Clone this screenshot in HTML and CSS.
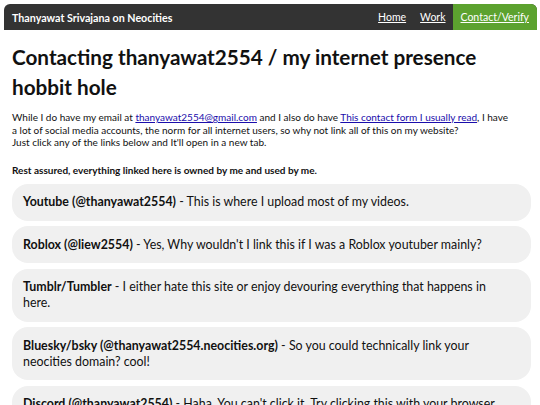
FILE: index.html
```html
<!DOCTYPE html>
<html>
<head>
<meta charset="utf-8">
<link rel="stylesheet" href="styles.css">
</head>
<body>
<nav class="nav">
  <span class="brand">Thanyawat Srivajana on Neocities</span>
  <div class="links">
    <a class="link" href="#">Home</a>
    <a class="link" href="#">Work</a>
    <a class="link active" href="#">Contact/Verify</a>
  </div>
</nav>
<main class="main">
  <h1 class="title">Contacting thanyawat2554 / my internet presence hobbit hole</h1>
  <p class="intro">While I do have my email at <a href="#">thanyawat2554@gmail.com</a> and I also do have <a href="#">This contact form I usually read</a>, I have a lot of social media accounts, the norm for all internet users, so why not link all of this on my website?<br>Just click any of the links below and It'll open in a new tab.</p>
  <p class="note">Rest assured, everything linked here is owned by me and used by me.</p>
  <ul class="cards">
    <li class="card"><b>Youtube (@thanyawat2554)</b> - This is where I upload most of my videos.</li>
    <li class="card"><b>Roblox (@liew2554)</b> - Yes, Why wouldn't I link this if I was a Roblox youtuber mainly?</li>
    <li class="card"><b>Tumblr/Tumbler</b> - I either hate this site or enjoy devouring everything that happens in here.</li>
    <li class="card"><b>Bluesky/bsky (@thanyawat2554.neocities.org)</b> - So you could technically link your neocities domain? cool!</li>
    <li class="card"><b>Discord (@thanyawat2554)</b> - Haha, You can't click it. Try clicking this with your browser.</li>
  </ul>
</main>
</body>
</html>
```
FILE: styles.css
```css
html, body { margin: 0; padding: 0; }
body {
  margin: 4px 3px 0 4px;
  font-family: Lato, "Noto Sans", sans-serif;
  color: #111;
  background: #fff;
}
.nav {
  display: flex;
  align-items: stretch;
  height: 26px;
  background: #333;
  border-radius: 6px 6px 0 0;
  color: #fff;
}
.brand {
  display: flex;
  align-items: center;
  padding-left: 8px;
  font-weight: 700;
  font-size: 10.7px;
}
.links {
  margin-left: auto;
  display: flex;
  align-items: stretch;
}
.link {
  display: flex;
  align-items: center;
  padding: 0 7px;
  color: #fff;
  font-size: 10.5px;
}
.link.active {
  background: #5ca22f;
  padding: 0 8px;
  border-radius: 0 6px 0 0;
}
.main {
  padding: 0 6px 0 8px;
}
.title {
  margin: 12px 0 9px;
  font-size: 20.7px;
  line-height: 30px;
  font-weight: 700;
}
.intro {
  margin: 0 0 15px;
  padding-right: 22px;
  font-size: 10px;
  line-height: 12.5px;
}
.intro a { color: #1a0dab; }
.note {
  margin: 0 0 8px;
  font-size: 10px;
  font-weight: 700;
}
.cards {
  list-style: none;
  margin: 0;
  padding: 0;
  display: flex;
  flex-direction: column;
  gap: 5.5px;
}
.card {
  background: #f0f0f0;
  border-radius: 16px;
  padding: 10.5px 24px 10.5px 11px;
  font-size: 12.4px;
  line-height: 16px;
}
```
